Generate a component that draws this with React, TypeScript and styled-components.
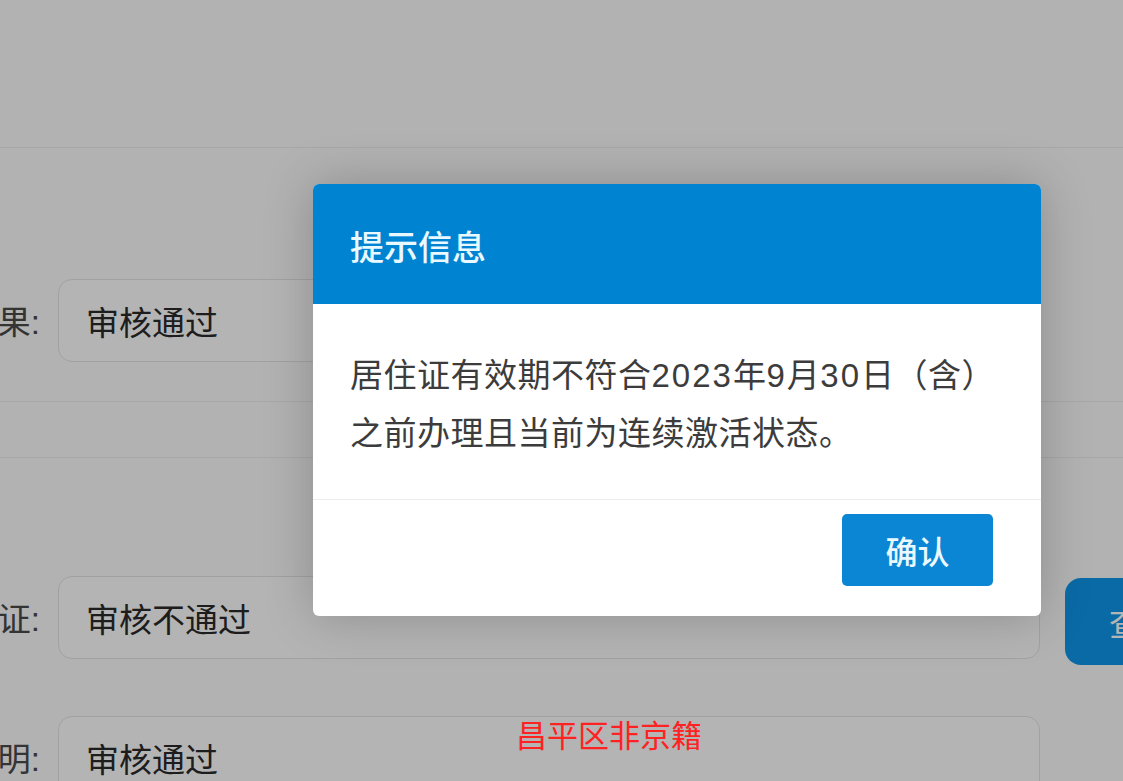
import React from "react";
import styled, { createGlobalStyle } from "styled-components";

const Global = createGlobalStyle`
  html, body {
    margin: 0;
    padding: 0;
    width: 1123px;
    height: 781px;
    overflow: hidden;
    background: #fbfbfb;
    font-family: "Liberation Sans", "Noto Sans CJK SC", sans-serif;
  }
  * { box-sizing: border-box; }
`;

const Page = styled.div`
  position: relative;
  width: 1123px;
  height: 781px;
  overflow: hidden;
  background: #fbfbfb;
`;

const TopArea = styled.div`
  height: 148px;
  border-bottom: 1px solid #ececec;
`;

const Section = styled.div<{ $pt: number; $pb: number; $gap?: number; $line?: boolean }>`
  padding-top: ${(p) => p.$pt}px;
  padding-bottom: ${(p) => p.$pb}px;
  border-bottom: ${(p) => (p.$line ? "1px solid #ececec" : "none")};
  display: flex;
  flex-direction: column;
  gap: ${(p) => p.$gap ?? 57}px;
`;

const Spacer = styled.div`
  height: 56px;
  border-bottom: 1px solid #ececec;
`;

const Row = styled.div`
  display: grid;
  grid-template-columns: 40px 982px 130px;
  column-gap: 18px;
  align-items: start;
  width: 1200px;
`;

const Label = styled.div`
  height: 82px;
  display: flex;
  align-items: center;
  justify-content: flex-end;
  overflow: hidden;
  white-space: nowrap;
  font-size: 33px;
  color: #4a4a4a;
`;

const Field = styled.div`
  height: 83px;
  border: 1px solid #e3e3e3;
  border-radius: 14px;
  background: #fefefe;
  display: flex;
  align-items: center;
  padding-left: 27px;
  font-size: 33px;
  color: #2a2a2a;
`;

const SearchButton = styled.button`
  margin-left: 7px;
  margin-top: 2px;
  height: 87px;
  width: 130px;
  border: none;
  border-radius: 16px;
  background: #0f96ea;
  color: #fff;
  font-family: inherit;
  font-size: 33px;
  text-align: left;
  padding-left: 44px;
`;

const Mask = styled.div`
  position: absolute;
  inset: 0;
  background: rgba(0, 0, 0, 0.29);
`;

const Dialog = styled.div`
  position: absolute;
  left: 313px;
  top: 184px;
  width: 728px;
  height: 432px;
  background: #fff;
  border-radius: 6px;
  overflow: hidden;
  box-shadow: 0 0 50px rgba(0, 0, 0, 0.22);
  display: flex;
  flex-direction: column;
`;

const DialogHeader = styled.div`
  height: 120px;
  background: #0084d1;
  display: flex;
  align-items: center;
  padding-left: 37px;
  padding-top: 2px;
  font-size: 34px;
  font-weight: 500;
  color: #eaf8ff;
`;

const DialogBody = styled.div`
  height: 196px;
  padding: 43px 37px 0;
  font-size: 33px;
  line-height: 58px;
  letter-spacing: 0.5px;
  color: #3c3c3c;
  border-bottom: 1px solid #ececec;
`;

const Digits = styled.span`
  letter-spacing: 2px;
`;

const DialogFooter = styled.div`
  flex: 1;
  display: flex;
  justify-content: flex-end;
  align-items: flex-start;
  padding: 14px 48px 0 0;
`;

const ConfirmButton = styled.button`
  width: 151px;
  height: 72px;
  border: none;
  border-radius: 5px;
  background: #0a86d4;
  color: #eaf8ff;
  font-family: inherit;
  font-size: 32px;
  font-weight: 500;
`;

const Caption = styled.div`
  position: absolute;
  left: 516px;
  top: 716px;
  font-size: 31px;
  line-height: 42px;
  color: #ff2222;
`;

export default function App() {
  return (
    <>
      <Global />
      <Page>
        <TopArea />
        <Section $pt={131} $pb={39} $line>
          <Row>
            <Label>审核结果:</Label>
            <Field>审核通过</Field>
          </Row>
        </Section>
        <Spacer />
        <Section $pt={118} $pb={0} $gap={51}>
          <Row>
            <Label>居住证:</Label>
            <Field>审核不通过</Field>
            <SearchButton>查询</SearchButton>
          </Row>
          <Row>
            <Label>证明:</Label>
            <Field>审核通过</Field>
          </Row>
        </Section>
        <Mask />
        <Dialog>
          <DialogHeader>提示信息</DialogHeader>
          <DialogBody>
            居住证有效期不符合<Digits>2023</Digits>年<Digits>9</Digits>月<Digits>30</Digits>日（含）
            <br />
            之前办理且当前为连续激活状态。
          </DialogBody>
          <DialogFooter>
            <ConfirmButton>确认</ConfirmButton>
          </DialogFooter>
        </Dialog>
        <Caption>昌平区非京籍</Caption>
      </Page>
    </>
  );
}
